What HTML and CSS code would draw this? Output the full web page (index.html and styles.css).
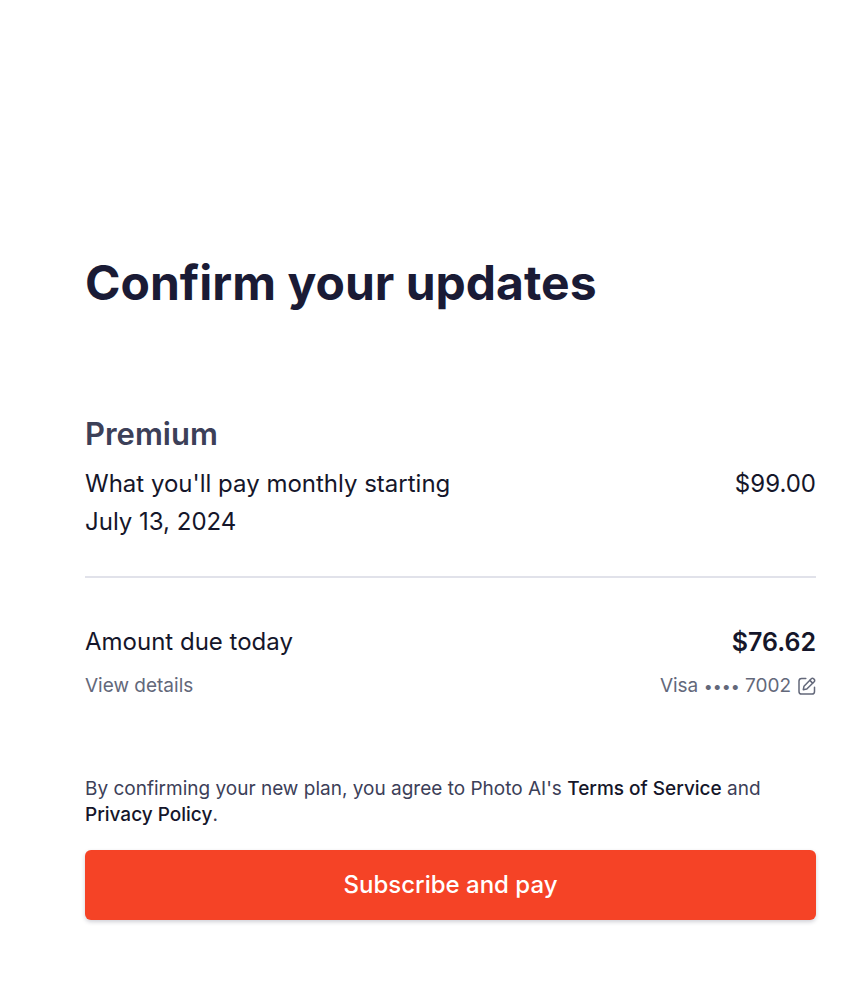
FILE: index.html
```html
<!DOCTYPE html>
<html lang="en">
<head>
<meta charset="utf-8">
<meta name="viewport" content="width=device-width, initial-scale=1">
<title>Confirm your updates</title>
<link rel="stylesheet" href="styles.css">
</head>
<body>
<main class="page">
  <h1 class="title">Confirm your updates</h1>
  <section class="plan">
    <h2 class="plan-name">Premium</h2>
    <div class="row">
      <p class="plan-text">What you'll pay monthly starting July 13, 2024</p>
      <p class="price">$99.00</p>
    </div>
  </section>
  <section class="due">
    <div class="row">
      <p>Amount due today</p>
      <p class="total">$76.62</p>
    </div>
    <div class="row small">
      <button class="plain" type="button">View details</button>
      <button class="plain card" type="button" aria-label="Change card, Visa ending in 7002">
        <span>Visa <span class="dots">••••</span> 7002</span>
        <svg class="edit" viewBox="0 0 18 18" fill="none" stroke="currentColor" stroke-width="1.5" stroke-linecap="round" stroke-linejoin="round" aria-hidden="true">
          <path d="M7.8 1.5H3.6A2.6 2.6 0 0 0 1 4.1v10.3A2.6 2.6 0 0 0 3.6 17h10.3a2.6 2.6 0 0 0 2.6-2.6v-4.2"/>
          <path d="M5.3 12.7l.7-3.5 7.3-7.4a1.6 1.6 0 0 1 2.3 0l.6.6a1.6 1.6 0 0 1 0 2.3L8.8 12z"/>
          <path d="M11.9 3.4l2.7 2.7"/>
        </svg>
      </button>
    </div>
  </section>
  <p class="legal">By confirming your new plan, you agree to Photo AI's <a class="link" href="#terms">Terms of Service</a> and <a class="link" href="#privacy">Privacy Policy</a>.</p>
  <button class="pay" type="button">Subscribe and pay</button>
</main>
</body>
</html>
```
FILE: styles.css
```css
* { box-sizing: border-box; }
body { margin: 0; background: #fff; color: #15162a; font: 24px/38px Inter, sans-serif; }
h1, h2, p { margin: 0; }
.page { padding: 251px 47px 80px 85px; }
.title { font-size: 48px; line-height: 64px; font-weight: 700; color: #1a1b35; }
.plan { margin-top: 99px; padding-bottom: 35px; border-bottom: 2px solid #e1e2ea; }
.plan-name { margin-bottom: 11px; font-size: 31px; line-height: 40px; font-weight: 600; color: #3c4058; }
.row { display: flex; justify-content: space-between; align-items: flex-start; gap: 24px; }
.plan-text { max-width: 400px; }
.due { padding-top: 45px; }
.total { font-size: 25px; font-weight: 600; }
.small { margin-top: 12px; font-size: 19px; line-height: 26px; }
.plain { padding: 0; border: 0; background: none; color: #63687a; font: inherit; cursor: pointer; }
.card { display: flex; align-items: center; gap: 7px; }
.dots { font-size: 16px; }
.edit { width: 18px; height: 18px; }
.legal { margin-top: 77px; font-size: 19px; line-height: 26px; color: #3c4058; }
.link { color: #15162a; font-weight: 500; text-decoration: none; }
.pay { display: block; width: 100%; margin-top: 22px; padding: 16px; border: 0; border-radius: 6px; background: #f54326; color: #fff; font: 500 24px/38px Inter, sans-serif; box-shadow: 0 2px 4px rgba(26, 27, 53, .2); cursor: pointer; }
```
